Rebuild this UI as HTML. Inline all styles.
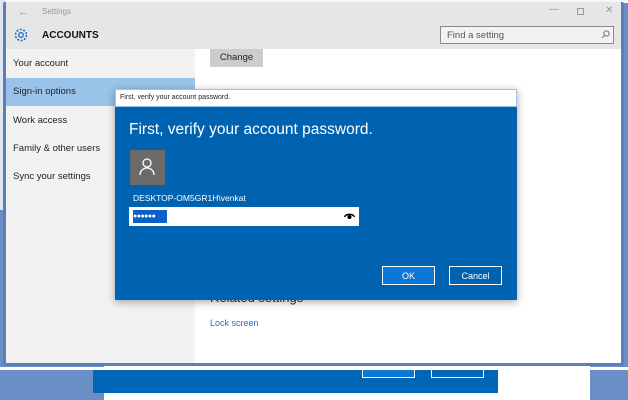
<!DOCTYPE html>
<html><head><style>
*{margin:0;padding:0;box-sizing:border-box}
body{width:628px;height:400px;overflow:hidden;background:#6a8fc6;font-family:"Liberation Sans",sans-serif;position:relative}
.a{position:absolute}
</style></head><body>
<div class="a" style="left:0;top:0;width:628px;height:3px;background:#f4f6f9"></div>
<div class="a" style="left:0;top:0;width:6px;height:210px;background:#dfe6ef"></div>
<!-- bottom back layer -->
<div class="a" style="left:0;top:367px;width:628px;height:3px;background:#fff"></div>
<div class="a" style="left:104px;top:366px;width:486px;height:34px;background:#fff"></div>
<div class="a" style="left:93px;top:370px;width:405px;height:23px;background:#0067b8"></div>
<div class="a" style="left:362px;top:370px;width:53px;height:8px;border:1px solid #fff;border-top:none;background:#0a78d7"></div>
<div class="a" style="left:431px;top:370px;width:53px;height:8px;border:1px solid #fff;border-top:none"></div>
<!-- window -->
<div class="a" style="left:3px;top:2px;width:621px;height:364px;background:#5b7fb8;border-radius:2px"></div>
<div class="a" style="left:6px;top:2px;width:615px;height:361px;background:#fff"></div>
<div class="a" style="left:6px;top:2px;width:615px;height:47px;background:#e6e6e6"></div>
<div class="a" style="left:18px;top:6px;font-size:11px;color:#999">&#8592;</div>
<div class="a" style="left:42px;top:7px;font-size:8px;color:#999">Settings</div>
<div class="a" style="left:549px;top:4px;font-size:10px;color:#999">&#8212;</div>
<div class="a" style="left:577px;top:8px;width:7px;height:7px;border:1px solid #999"></div>
<div class="a" style="left:605px;top:5px;font-size:10px;color:#999">&#x2715;</div>
<svg class="a" style="left:13px;top:27px" width="16" height="16" viewBox="0 0 16 16"><circle cx="8" cy="8" r="5.5" fill="none" stroke="#1a6fc9" stroke-width="1.6" stroke-dasharray="2 1.5"/><circle cx="8" cy="8" r="2.3" fill="none" stroke="#1a6fc9" stroke-width="1.3"/></svg>
<div class="a" style="left:42px;top:30px;font-size:10px;font-weight:bold;color:#111">ACCOUNTS</div>
<div class="a" style="left:440px;top:26px;width:174px;height:18px;border:1px solid #888;background:#f2f2f2;font-size:9.5px;color:#555;padding:3px 6px">Find a setting</div>
<svg class="a" style="left:601px;top:30px" width="9" height="9" viewBox="0 0 9 9"><circle cx="5.5" cy="3.5" r="2.6" fill="none" stroke="#777"/><path d="M3.6 5.4L1 8" stroke="#777"/></svg>
<div class="a" style="left:6px;top:49px;width:189px;height:314px;background:#f2f2f2"></div>
<div class="a" style="left:6px;top:78px;width:189px;height:28px;background:#99c3e8"></div>
<div class="a" style="left:13px;top:58px;font-size:9.5px;color:#222;line-height:12px">Your account</div>
<div class="a" style="left:13px;top:86px;font-size:9.5px;color:#222">Sign-in options</div>
<div class="a" style="left:13px;top:115px;font-size:9.5px;color:#222">Work access</div>
<div class="a" style="left:13px;top:143px;font-size:9.5px;color:#222">Family &amp; other users</div>
<div class="a" style="left:13px;top:171px;font-size:9.5px;color:#222">Sync your settings</div>
<div class="a" style="left:210px;top:49px;width:53px;height:18px;background:#ccc;font-size:9.5px;color:#222;text-align:center;padding-top:3px">Change</div>
<div class="a" style="left:210px;top:290px;font-size:13px;color:#333">Related settings</div>
<div class="a" style="left:210px;top:318px;font-size:9px;color:#1a73c9">Lock screen</div>
<!-- dialog -->
<div class="a" style="left:115px;top:89px;width:402px;height:211px;background:#0063b1;box-shadow:0 2px 8px rgba(0,0,0,.35)"></div>
<div class="a" style="left:115px;top:89px;width:402px;height:18px;background:#fff;border:1px solid #9fc3e6;font-size:7px;color:#222;padding:4px 4px">First, verify your account password.</div>
<div class="a" style="left:129px;top:121px;font-size:15.5px;color:#fff">First, verify your account password.</div>
<div class="a" style="left:130px;top:150px;width:35px;height:35px;background:#6b6b6b"></div>
<svg class="a" style="left:138px;top:157px" width="18" height="20" viewBox="0 0 18 20"><circle cx="9" cy="6" r="4" fill="none" stroke="#fff" stroke-width="1.3"/><path d="M2 18c0-4 3-7 7-7s7 3 7 7" fill="none" stroke="#fff" stroke-width="1.3"/></svg>
<div class="a" style="left:133px;top:193px;font-size:8.5px;color:#fff">DESKTOP-OM5GR1H\venkat</div>
<div class="a" style="left:129px;top:207px;width:230px;height:19px;background:#fff"></div>
<div class="a" style="left:133px;top:210px;width:34px;height:13px;background:#0a5fc9;color:#fff;font-size:7px;line-height:13px;letter-spacing:-.5px">&#9679;&#9679;&#9679;&#9679;&#9679;&#9679;</div>
<svg class="a" style="left:344px;top:212px" width="11" height="8" viewBox="0 0 11 8"><path d="M0.5 5C2 1.5 9 1.5 10.5 5" fill="none" stroke="#000" stroke-width="1.4"/><circle cx="5.5" cy="5" r="2" fill="#000"/></svg>
<div class="a" style="left:382px;top:266px;width:53px;height:19px;background:#0a78d7;border:1px solid #fff;color:#fff;font-size:9px;text-align:center;padding-top:4px">OK</div>
<div class="a" style="left:449px;top:266px;width:53px;height:19px;border:1px solid #fff;color:#fff;font-size:9px;text-align:center;padding-top:4px">Cancel</div>
</body></html>
